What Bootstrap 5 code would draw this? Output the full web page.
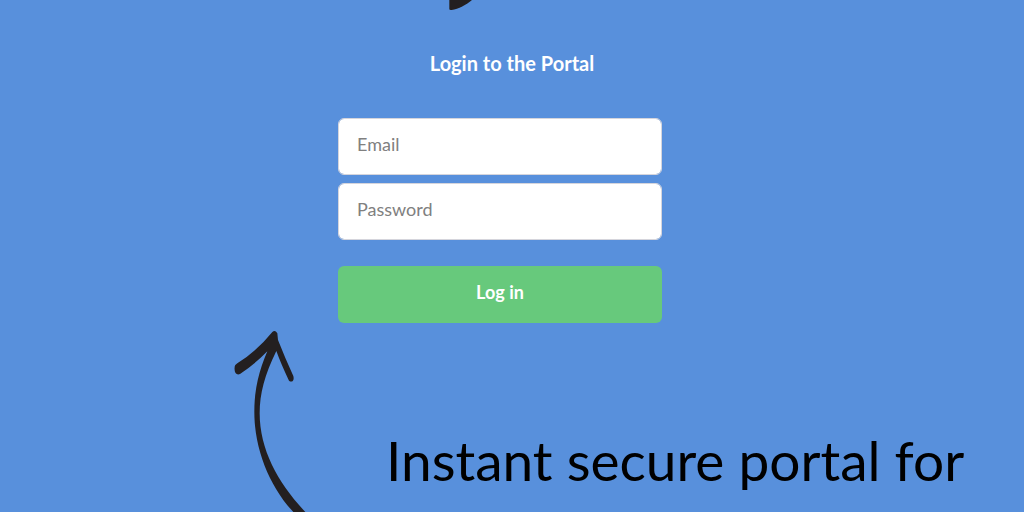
<!DOCTYPE html>
<html lang="en">
<head>
<meta charset="utf-8">
<meta name="viewport" content="width=device-width, initial-scale=1">
<title>Login to the Portal</title>
<link href="https://cdn.jsdelivr.net/npm/bootstrap@5.3.0/dist/css/bootstrap.min.css" rel="stylesheet">
<style>
body { background: #5890dc; font-family: Lato, sans-serif; overflow: hidden; }
.stroke-end { left: 449px; }
.portal-title { font-size: 20px; line-height: 24px; font-weight: 700; padding-top: 51px; margin-bottom: 43px; }
.form-area { padding-right: 24px; }
.login-form { max-width: 324px; }
.login-form .form-control { height: 57px; padding: 0 18px 5px; border: 1px solid #d5d5dc; border-radius: 6px; font-size: 18px; color: #555; }
.login-form .form-control::placeholder { color: #808080; }
.btn-login, .btn-login:hover { height: 57px; margin-top: 18px; padding: 0 0 4px; border: 0; border-radius: 6px; background: #67c97c; color: #fff; font-size: 18px; font-weight: 700; }
.callout-row { margin-top: 7px; padding-left: 234px; }
.tagline { font-size: 55px; line-height: 64px; color: #000; margin: 98px 0 0 78px; }
</style>
</head>
<body>
<svg class="stroke-end position-absolute top-0" width="26" height="11" viewBox="0 0 78 33" aria-hidden="true"><path fill="#231f20" d="M1 0H69C52 15 28 27 8 30Q1 31 1 27Z"/></svg>
<main>
  <h1 class="portal-title text-white text-center">Login to the Portal</h1>
  <div class="form-area">
    <form class="login-form mx-auto d-flex flex-column gap-2">
      <input class="form-control" type="email" id="email" placeholder="Email" aria-label="Email">
      <input class="form-control" type="password" id="password" placeholder="Password" aria-label="Password">
      <button class="btn btn-login w-100" type="submit">Log in</button>
    </form>
  </div>
  <div class="callout-row d-flex align-items-start">
    <svg class="flex-shrink-0" width="74" height="182" viewBox="42 30 222 546" aria-hidden="true"><path fill="#231f20" d="M157 36Q165 28 172 40L174 60Q196 116 220 168C224 182 215 189 207 182Q184 134 169 93C134 165 119 220 119 280C119 390 175 490 256 576H220C150 500 103 390 103 275C103 205 118 150 142 94Q105 132 60 162C49 167 42 157 44 142Q43 135 52 130Q108 96 157 36Z"/></svg>
    <p class="tagline text-nowrap">Instant secure portal for</p>
  </div>
</main>
<script src="https://cdn.jsdelivr.net/npm/bootstrap@5.3.0/dist/js/bootstrap.bundle.min.js"></script>
</body>
</html>
